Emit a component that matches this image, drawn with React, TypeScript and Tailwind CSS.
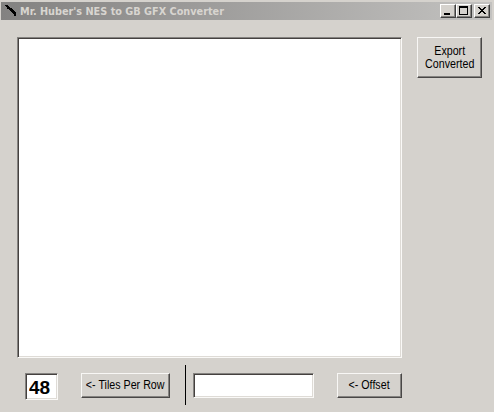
import type { ReactNode } from "react"
import clsx from "clsx"

function CaptionButton({ children }: { children: ReactNode }) {
  return (
    <button className="h-[14px] w-4 border border-t-white border-r-[#404040] border-b-[#404040] border-l-white bg-[#d5d2cd] shadow-[inset_-1px_-1px_0_#858380]">
      <svg
        className="block h-3 w-[14px]"
        viewBox="0 0 14 12"
        fill="none"
        stroke="black"
        shapeRendering="crispEdges"
      >
        {children}
      </svg>
    </button>
  )
}

function PushButton({
  className,
  children,
}: {
  className?: string
  children: ReactNode
}) {
  return (
    <button
      className={clsx(
        "flex items-center justify-center border border-t-[#f8f7f5] border-r-[#494746] border-b-[#494746] border-l-[#f8f7f5] bg-[#d5d2cd] text-center text-[12px] leading-[13px] whitespace-nowrap shadow-[inset_-1px_-1px_0_#858380]",
        className
      )}
    >
      <span className="block scale-x-[0.89]">{children}</span>
    </button>
  )
}

const sunken =
  "border border-t-[#858380] border-r-[#faf9f7] border-b-[#faf9f7] border-l-[#858380] bg-white shadow-[inset_1px_1px_0_#45413f,inset_-1px_-1px_0_#dedbd6]"

export default function App() {
  return (
    <div className="h-[412px] w-[494px] overflow-hidden bg-[#d5d2cd] pt-[2px] pl-px font-['Liberation_Sans',sans-serif] text-black">
      <header className="mr-[2px] flex h-[18px] items-center bg-linear-to-r from-[#838281] to-[#c3c2c0] pr-[2px] pl-[3px]">
        <svg className="h-4 w-4 shrink-0" viewBox="0 0 16 16">
          <path
            d="M1 2h2l2 2h1v1h1l5 5v3h-2v-1L9 11 5 7 4 6H3V5L1 3z"
            fill="black"
            shapeRendering="crispEdges"
          />
        </svg>
        <svg className="h-[18px] w-[215px]" viewBox="0 0 215 18">
          <text
            x="0"
            y="13"
            textLength="204"
            lengthAdjust="spacingAndGlyphs"
            className="fill-[#d8d5d0] font-['DejaVu_Sans_Condensed','DejaVu_Sans',sans-serif] text-[11px] font-bold"
          >
            Mr. Huber's NES to GB GFX Converter
          </text>
        </svg>
        <div className="ml-auto flex">
          <CaptionButton>
            <path d="M3 9h6" strokeWidth="2" />
          </CaptionButton>
          <CaptionButton>
            <path d="M2 2h9" strokeWidth="2" />
            <path d="M2.5 2v7.5h8V2" />
          </CaptionButton>
          <div className="w-[2px]" />
          <CaptionButton>
            <path d="M3 2l7 7M4 2l7 7M10 2L3 9M11 2L4 9" />
          </CaptionButton>
        </div>
      </header>

      <main className="mt-[17px] ml-4 flex items-start gap-[15px]">
        <div className={clsx("h-[321px] w-[385px]", sunken)} />
        <PushButton className="h-[41px] w-[65px]">
          Export
          <br />
          Converted
        </PushButton>
      </main>

      <footer className="mt-[7px] ml-6 flex items-start">
        <input
          className={clsx(
            "mt-2 h-[27px] w-[33px] pt-[2px] pl-[3px] text-[19px] leading-[22px] font-bold",
            sunken
          )}
          defaultValue="48"
        />
        <PushButton className="mt-2 ml-[23px] h-[25px] w-[89px]">
          &lt;- Tiles Per Row
        </PushButton>
        <div className="ml-[15px] h-10 w-px bg-black" />
        <input
          className={clsx("mt-2 ml-[7px] h-[25px] w-[121px] px-1", sunken)}
        />
        <PushButton className="mt-2 ml-[23px] h-[25px] w-[65px]">
          &lt;- Offset
        </PushButton>
      </footer>
    </div>
  )
}
